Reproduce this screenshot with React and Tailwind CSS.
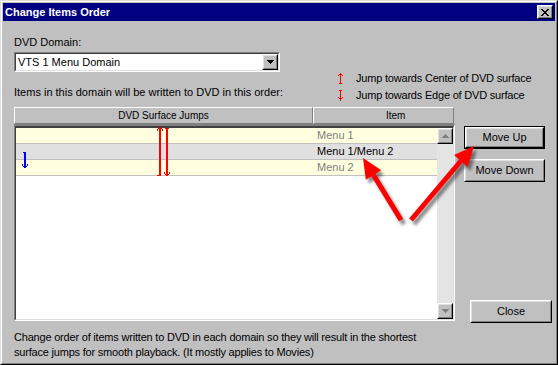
import React from 'react';

const FONT = "font-['Liberation_Sans',Arial,sans-serif]";

function Raised({ className = '', innerClassName = '', children }) {
    return (
        <div className={`flex border border-t-white border-l-white border-r-black border-b-black ${className}`}>
            <div className={`flex flex-1 border border-t-[#dfdfdf] border-l-[#dfdfdf] border-r-[#808080] border-b-[#808080] bg-[#c0c0c0] ${innerClassName}`}>
                {children}
            </div>
        </div>
    );
}

function Button({ children, isDefault, className = '' }) {
    return (
        <div className={`flex ${isDefault ? 'border border-black' : ''} ${className}`}>
            <Raised className="flex-1" innerClassName="items-center justify-center text-[11px] leading-[13px] text-black">
                {children}
            </Raised>
        </div>
    );
}

function Tri({ up, color }) {
    return (
        <svg width="7" height="4" viewBox="0 0 7 4" shapeRendering="crispEdges">
            {up ? (
                <path d="M3 0h1v1h-1zM2 1h3v1h-3zM1 2h5v1h-5zM0 3h7v1h-7z" fill={color} />
            ) : (
                <path d="M0 0h7v1h-7zM1 1h5v1h-5zM2 2h3v1h-3zM3 3h1v1h-1z" fill={color} />
            )}
        </svg>
    );
}

function LegendArrow({ up }) {
    return (
        <svg width="5" height="11" viewBox="0 0 5 11" shapeRendering="crispEdges">
            <rect x="2" y="0" width="1" height="11" fill="#ff0000" />
            {up ? (
                <path d="M1 1h3v1h-3zM0 2h1v1h-1zM4 2h1v1h-1zM1 10h3v1h-3z" fill="#ff0000" />
            ) : (
                <path d="M1 0h3v1h-3zM1 9h3v-1h-3zM0 8h1v-1h-1zM4 8h1v-1h-1z" fill="#ff0000" />
            )}
        </svg>
    );
}

const rows = [
    { item: 'Menu 1', bg: 'bg-[#ffffe0]', text: 'text-[#808080]' },
    { item: 'Menu 1/Menu 2', bg: 'bg-[#e0e0e0]', text: 'text-black' },
    { item: 'Menu 2', bg: 'bg-[#ffffe0]', text: 'text-[#808080]' },
];

function BigArrows() {
    const arrows = [
        { shaft: 'M400 219 L372.5 174', head: '362,157 380.2,169.3 364.8,178.7' },
        { shaft: 'M410 219 L459.8 160', head: '473,145 466.6,165.9 453,154.1' },
    ];
    return (
        <svg className="pointer-events-none absolute left-0 top-0" width="558" height="365" viewBox="0 0 558 365">
            <defs>
                <filter id="blur" x="-20%" y="-20%" width="140%" height="140%">
                    <feGaussianBlur stdDeviation="1.6" />
                </filter>
            </defs>
            <g transform="translate(3 4)" filter="url(#blur)" opacity="0.45">
                {arrows.map((a, i) => (
                    <g key={i}>
                        <path d={a.shaft} stroke="#000" strokeWidth="5" />
                        <polygon points={a.head} fill="#000" />
                    </g>
                ))}
            </g>
            {arrows.map((a, i) => (
                <g key={i}>
                    <path d={a.shaft} stroke="#ff0000" strokeWidth="5" />
                    <polygon points={a.head} fill="#ff0000" />
                </g>
            ))}
        </svg>
    );
}

export default function App() {
    return (
        <div className={`relative flex h-[365px] w-[558px] border border-t-[#dfdfdf] border-l-[#dfdfdf] border-r-black border-b-black ${FONT} text-[11px] text-black`}>
            <div className="flex flex-1 flex-col border border-t-white border-l-white border-r-[#808080] border-b-[#808080] bg-[#c0c0c0] p-px">
                {/* Title bar */}
                <div className="flex h-[18px] items-center bg-[#000080] pl-[2px] pr-[2px]">
                    <span className="text-[11px] leading-[13px] font-bold text-white">Change Items Order</span>
                    <Raised className="ml-auto h-[14px] w-[16px]" innerClassName="items-center justify-center">
                        <svg width="8" height="7" viewBox="0 0 8 7" shapeRendering="crispEdges">
                            <path d="M0 0h2v1h-2zM6 0h2v1h-2zM1 1h2v1h-2zM5 1h2v1h-2zM2 2h4v1h-4zM3 3h2v1h-2zM2 4h4v1h-4zM1 5h2v1h-2zM5 5h2v1h-2zM0 6h2v1h-2zM6 6h2v1h-2z" fill="#000" />
                        </svg>
                    </Raised>
                </div>

                <div className="flex flex-1 flex-col pl-[11px] pr-[3px]">
                    {/* Domain selector and legend */}
                    <div className="flex h-[86px]">
                        <div className="flex w-[266px] flex-col">
                            <div className="mt-[15px] leading-[13px]">DVD Domain:</div>
                            <div className="mt-[3px] flex h-[20px] border border-t-[#808080] border-l-[#808080] border-r-white border-b-white">
                                <div className="flex flex-1 items-center border border-t-[#404040] border-l-[#404040] border-r-[#dfdfdf] border-b-[#dfdfdf] bg-white">
                                    <span className="pl-[2px] leading-[13px]">VTS 1 Menu Domain</span>
                                    <Raised className="ml-auto h-[16px] w-[16px]" innerClassName="items-center justify-center">
                                        <Tri color="#000" />
                                    </Raised>
                                </div>
                            </div>
                            <div className="mt-[14px] whitespace-nowrap leading-[13px]">Items in this domain will be written to DVD in this order:</div>
                        </div>
                        <div className="mt-[49px] ml-[58px] flex flex-col tracking-[-0.2px]">
                            <div className="flex h-[17px] items-center">
                                <div className="w-[18px]">
                                    <LegendArrow up />
                                </div>
                                <span>Jump towards Center of DVD surface</span>
                            </div>
                            <div className="flex h-[17px] items-center">
                                <div className="w-[18px]">
                                    <LegendArrow />
                                </div>
                                <span>Jump towards Edge of DVD surface</span>
                            </div>
                        </div>
                    </div>

                    {/* List and buttons */}
                    <div className="flex">
                        <div className="flex w-[441px] flex-col">
                            <div className="flex h-[17px] w-[440px] overflow-hidden text-[10px] leading-[12px]">
                                <div className="flex w-[299px] items-center justify-center border border-t-white border-l-white border-r-[#808080] border-b-[#808080]">
                                    DVD Surface Jumps
                                </div>
                                <div className="flex flex-1 items-center border border-t-white border-l-white border-r-[#808080] border-b-[#808080] pl-[72px]">
                                    Item
                                </div>
                            </div>
                            <div className="flex h-[197px] border border-t-2 border-t-[#808080] border-l-[#808080] border-r-white border-b-white">
                                <div className="flex flex-1 border border-t-2 border-t-[#404040] border-l-[#404040] border-r-[#dfdfdf] border-b-[#dfdfdf]">
                                    <div className="relative flex-1 bg-white">
                                        {rows.map((r) => (
                                            <div key={r.item} className={`flex h-[16px] border-b border-[#c0c0c0] ${r.bg}`}>
                                                <div className="w-[297px]" />
                                                <div className={`pl-[4px] leading-[15px] ${r.text}`}>{r.item}</div>
                                            </div>
                                        ))}
                                        <svg className="absolute left-0 top-0 overflow-visible" width="421" height="60" viewBox="0 0 421 60" shapeRendering="crispEdges">
                                            {/* jump towards center */}
                                            <rect x="143" y="-1" width="2" height="49" fill="#ff0000" />
                                            <path d="M142 0h1v1h-1zM145 0h1v1h-1zM141 1h1v2h-1zM146 1h1v2h-1zM141 47h2v1h-2z" fill="#ff0000" />
                                            {/* jump towards edge */}
                                            <rect x="150" y="0" width="2" height="48" fill="#ff0000" />
                                            <path d="M149 0h1v1h-1zM152 0h1v1h-1zM149 46h1v1h-1zM152 46h1v1h-1zM148 44h1v2h-1zM153 44h1v2h-1z" fill="#ff0000" />
                                            {/* blue jump */}
                                            <rect x="8" y="24" width="2" height="16" fill="#0000ff" />
                                            <path d="M7 24h1v1h-1zM7 38h1v1h-1zM10 38h1v1h-1zM6 36h1v2h-1zM11 36h1v2h-1z" fill="#0000ff" />
                                        </svg>
                                    </div>
                                    <div className="flex w-[16px] flex-col justify-between bg-[#e4e4e4]">
                                        <Raised className="h-[16px] w-[16px]" innerClassName="items-center justify-center">
                                            <Tri up color="#808080" />
                                        </Raised>
                                        <Raised className="h-[16px] w-[16px]" innerClassName="items-center justify-center">
                                            <Tri color="#808080" />
                                        </Raised>
                                    </div>
                                </div>
                            </div>
                        </div>

                        <div className="ml-[9px] flex flex-col">
                            <Button isDefault className="mt-[19px] h-[23px] w-[81px]">Move Up</Button>
                            <Button className="mt-[10px] h-[23px] w-[81px]">Move Down</Button>
                            <Button className="mt-[118px] ml-[6px] h-[23px] w-[82px]">Close</Button>
                        </div>
                    </div>

                    {/* Footer note */}
                    <div className="mt-[7px] leading-[15px] tracking-[-0.2px]">
                        Change order of items written to DVD in each domain so they will result in the shortest
                        <br />
                        surface jumps for smooth playback. (It mostly applies to Movies)
                    </div>
                </div>
            </div>
            <BigArrows />
        </div>
    );
}
